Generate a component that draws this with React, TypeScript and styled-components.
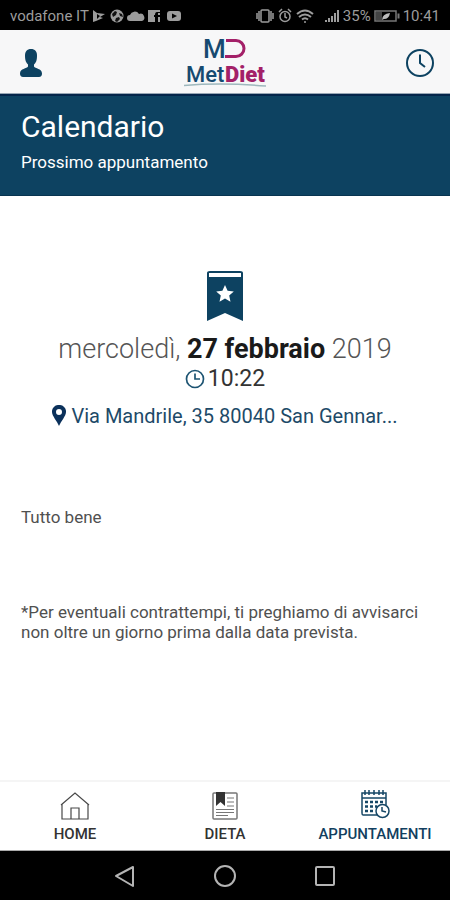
import React from "react";
import styled, { createGlobalStyle } from "styled-components";

const navy = "#0d4261";

const GlobalStyle = createGlobalStyle`
  *, *::before, *::after { box-sizing: border-box; }
  body { margin: 0; background: #fff; font-family: Roboto, "Liberation Sans", sans-serif; }
  h1, p { margin: 0; }
  svg { display: block; flex: none; }
`;

const Screen = styled.div`
  display: flex;
  flex-direction: column;
  min-height: 100vh;
`;

const StatusBar = styled.div`
  display: flex;
  align-items: center;
  justify-content: space-between;
  height: 30px;
  padding: 2px 10px 0;
  background: #000;
  color: #9c9c9c;
  font-size: 15px;
  white-space: nowrap;
`;

const StatusGroup = styled.div<{ $gap: number }>`
  display: flex;
  align-items: center;
  gap: ${(p) => p.$gap}px;
`;

const Header = styled.header`
  display: grid;
  grid-template-columns: 1fr auto 1fr;
  align-items: center;
  height: 64px;
  padding: 2px 15px 0;
  background: #f7f7f8;
  border-bottom: 1px solid #98a6b4;
`;

const IconButton = styled.button<{ $end?: boolean }>`
  justify-self: ${(p) => (p.$end ? "end" : "start")};
  padding: 0;
  border: 0;
  background: none;
  color: ${navy};
  cursor: pointer;
`;

const Banner = styled.section`
  height: 102px;
  padding: 14px 21px;
  background: ${navy};
  border-top: 2px solid #04254a;
  border-bottom: 1px solid #083450;
  color: #fff;
`;

const Title = styled.h1`
  font-size: 30px;
  line-height: 34px;
  font-weight: 400;
`;

const Subtitle = styled.p`
  margin-top: 8px;
  font-size: 17px;
  line-height: 20px;
`;

const Main = styled.main`
  flex: 1;
  padding: 74px 21px 0;
`;

const Appointment = styled.section`
  display: flex;
  flex-direction: column;
  align-items: center;
`;

const DateLine = styled.p`
  margin-top: 9px;
  font-size: 27px;
  line-height: 36px;
  font-weight: 300;
  color: #555;
  white-space: nowrap;
  strong { font-weight: 700; color: #1a1a1a; }
`;

const TimeLine = styled.p`
  display: flex;
  align-items: center;
  gap: 3px;
  font-size: 23px;
  line-height: 24px;
  color: #333;
  svg { color: #1d5472; }
`;

const AddressLink = styled.a`
  display: flex;
  align-items: center;
  gap: 5px;
  margin-top: 13px;
  font-size: 20px;
  line-height: 24px;
  color: #1d4a68;
  text-decoration: none;
  white-space: nowrap;
`;

const Paragraph = styled.p<{ $top: number }>`
  margin-top: ${(p) => p.$top}px;
  font-size: 17px;
  line-height: 20px;
  color: #505050;
`;

const TabBar = styled.nav`
  display: grid;
  grid-template-columns: repeat(3, 1fr);
  height: 71px;
  background: #fff;
  border-top: 2px solid #f5f5f5;
  border-bottom: 1px solid #aaa;
`;

const Tab = styled.a<{ $active?: boolean }>`
  display: flex;
  flex-direction: column;
  align-items: center;
  gap: 3px;
  padding-top: 7px;
  font-size: 15px;
  line-height: 20px;
  font-weight: 500;
  color: ${(p) => (p.$active ? "#123f60" : "#333")};
  text-decoration: none;
`;

const SystemBar = styled.div`
  display: flex;
  align-items: center;
  justify-content: center;
  gap: 76px;
  height: 49px;
  background: #000;
`;

const SystemButton = styled.button`
  padding: 0;
  border: 0;
  background: none;
  color: #b4b4b4;
  cursor: pointer;
`;

const ClockIcon = ({ size, stroke }: { size: number; stroke: number }) => (
  <svg width={size} height={size} viewBox="0 0 30 30" fill="none" stroke="currentColor" strokeWidth={stroke} aria-hidden="true">
    <circle cx="15" cy="15" r="13" />
    <path d="M15 6.500V15l5 4" />
  </svg>
);

const SmallClockIcon = () => (
  <svg width="20" height="20" viewBox="0 0 20 20" fill="none" stroke="currentColor" strokeWidth="1.700" aria-hidden="true">
    <circle cx="10" cy="10" r="8.500" />
    <path d="M10 4.500V10h5" />
  </svg>
);

const LeftStatusIcons = () => (
  <svg width="90" height="16" viewBox="0 0 90 16" fill="#9c9c9c" aria-hidden="true">
    <path d="M1 2l4 3 8 1-5 3 3 1-7 3-3 1z" />
    <path d="M5 6l3 2-3 3z" fill="#000" />
    <circle cx="25" cy="8" r="6.500" />
    <path d="M20 6l3-3 2 1-1 3-3 2zM27 5l3 1 1 3-3-1zM24 10l3-1 1 2-3 3-2-1z" fill="#111" />
    <path d="M38 13a3 3 0 0 1 0-6 5 5 0 0 1 9-1 3.500 3.500 0 0 1 3 7z" />
    <path d="M56 2h12v12h-2V9h2V7h-2V5h2V4h-3q-2 0-2 3h-1v2h1v5h-7z" />
    <rect x="75" y="3" width="14" height="10" rx="3" />
    <path d="M80 5.500l5 2.500-5 2.500z" fill="#000" />
  </svg>
);

const AlertIcons = () => (
  <svg width="58" height="16" viewBox="0 0 58 16" fill="none" stroke="#9c9c9c" strokeWidth="1.500" aria-hidden="true">
    <rect x="5" y="2" width="8" height="12" rx="1" />
    <path d="M1 5v6M3 3v10M15 3v10M17 5v6" />
    <circle cx="29" cy="8.500" r="5" />
    <path d="M29 5v4l2 1M23 4l3-3M32 1l3 3" />
    <path d="M41 6q8-7 16 0M43 9q6-5 12 0M46 11.500q3-2.500 6 0" strokeWidth="2" />
    <circle cx="49" cy="14" r="1" fill="#9c9c9c" stroke="none" />
  </svg>
);

const SignalIcon = () => (
  <svg width="16" height="16" viewBox="0 0 16 16" stroke="#9c9c9c" strokeWidth="2" aria-hidden="true">
    <path d="M2 14v-2M5 14v-4M8 14V8M11 14V5M14 14V2" />
  </svg>
);

const BatteryIcon = () => (
  <svg width="26" height="14" viewBox="0 0 26 14" fill="none" stroke="#777" aria-hidden="true">
    <rect x="1" y="2" width="21" height="10" strokeWidth="1.500" />
    <path d="M2 3h6v8H2z" fill="#444" stroke="none" />
    <path d="M8 11q0-6 8-7-1 6-6 6z" fill="#bbb" stroke="none" />
    <path d="M24.500 4.500v5" strokeWidth="2" />
  </svg>
);

const LogoSvg = styled.svg`
  overflow: visible;
  font-family: Roboto, "Liberation Sans", sans-serif;
`;

const Logo = () => (
  <LogoSvg width="84" height="56" viewBox="0 0 84 56" role="img" aria-label="MetDiet">
    <text x="20" y="23" fontSize="26" fontWeight="500" fill="#164a70">M</text>
    <path d="M43 5.500h10a8 8 0 0 1 0 16H42" fill="none" stroke="#a32068" strokeWidth="3" />
    <text x="3" y="47" fontSize="22" fontWeight="500" fill="#164a70">Met</text>
    <text x="42" y="47" fontSize="22" fontWeight="900" fill="#a32068">Diet</text>
    <path d="M1 50.500q38-3 82 .500" fill="none" stroke="#9eb8bd" strokeWidth="1.500" />
  </LogoSvg>
);

export default function App() {
  return (
    <Screen>
      <GlobalStyle />
      <StatusBar>
        <StatusGroup $gap={3}>
          <span>vodafone IT</span>
          <LeftStatusIcons />
        </StatusGroup>
        <StatusGroup $gap={10}>
          <AlertIcons />
          <StatusGroup $gap={3}>
            <SignalIcon />
            <span>35%</span>
            <BatteryIcon />
            <span>10:41</span>
          </StatusGroup>
        </StatusGroup>
      </StatusBar>
      <Header>
        <IconButton aria-label="Profilo">
          <svg width="32" height="30" viewBox="-5 0 32 30" fill="currentColor">
            <path d="M11 1c4 0 6 2.500 6 6.500 0 5-1 7-3 9v2c1 2 8 2 8 7 0 2-1 3.500-3 3.500H3c-2 0-3-1.500-3-3.500 0-5 7-5 8-7v-2c-2-2-3-4-3-9C5 3.500 7 1 11 1z" />
          </svg>
        </IconButton>
        <Logo />
        <IconButton $end aria-label="Cronologia"><ClockIcon size={30} stroke={2} /></IconButton>
      </Header>
      <Banner>
        <Title>Calendario</Title>
        <Subtitle>Prossimo appuntamento</Subtitle>
      </Banner>
      <Main>
        <Appointment>
          <svg width="36" height="52" viewBox="0 0 36 52" aria-hidden="true">
            <path d="M3 1h30q3 0 3 2v48l-18-8-18 8V3q0-2 3-2z" fill={navy} />
            <path d="M2 3h32v4H2z" fill="#fff" />
            <path d="M18 15l2.600 5.700 6.200.700-4.600 4.200 1.300 6.100-5.500-3.100-5.500 3.100 1.300-6.100-4.600-4.200 6.200-.700z" fill="#fff" />
          </svg>
          <DateLine>mercoledì, <strong>27 febbraio</strong> 2019</DateLine>
          <TimeLine><SmallClockIcon />10:22</TimeLine>
          <AddressLink href="#mappa">
            <svg width="14" height="22" viewBox="0 0 14 22" fill="#0b315b" aria-hidden="true">
              <path fillRule="evenodd" d="M7 0a6.500 6.500 0 0 1 7 7C14 11 9 16 7 21 5 16 0 11 0 7a6.500 6.500 0 0 1 7-7zm0 4a3 3 0 1 0 0 6 3 3 0 0 0 0-6z" />
            </svg>
            <span>Via Mandrile, 35 80040 San Gennar...</span>
          </AddressLink>
        </Appointment>
        <Paragraph $top={79}>Tutto bene</Paragraph>
        <Paragraph $top={75}>*Per eventuali contrattempi, ti preghiamo di avvisarci non oltre un giorno prima dalla data prevista.</Paragraph>
      </Main>
      <TabBar>
        <Tab href="#home">
          <svg width="30" height="32" viewBox="0 0 30 32" fill="none" stroke="#484848" strokeWidth="1.200" aria-hidden="true">
            <path d="M1 16L15 4l14 12M2 15v15h26V15M11 30V19h8v11" />
          </svg>
          HOME
        </Tab>
        <Tab href="#dieta">
          <svg width="28" height="32" viewBox="0 0 28 32" fill="none" stroke="#777" aria-hidden="true">
            <rect x="2" y="4" width="24" height="26" rx="1" strokeWidth="1.500" />
            <path d="M5 3h9v14l-4.500-4L5 17z" fill="#333" stroke="none" />
            <path d="M16 9h7M16 13h7M16 17h7M5 20.500h18M5 23.500h18M5 26.500h12" />
          </svg>
          DIETA
        </Tab>
        <Tab href="#appuntamenti" $active>
          <svg width="30" height="32" viewBox="0 0 30 32" fill="none" stroke="#164766" strokeWidth="1.500" aria-hidden="true">
            <path d="M17 26H3q-1 0-1-2V4h24v12M2 9h24M5 1v5M9 1v5M14 1v5M19 1v5M23 1v5" />
            <path d="M5 13h3M10 13h3M15 13h3M20 13h3M5 17.500h3M10 17.500h3M15 17.500h2M5 22h3M10 22h3" strokeWidth="2.500" />
            <circle cx="22.500" cy="22" r="6.500" fill="#fff" />
            <path d="M22 18v4l4 1" />
          </svg>
          APPUNTAMENTI
        </Tab>
      </TabBar>
      <SystemBar>
        <SystemButton aria-label="Indietro"><svg width="24" height="24" viewBox="0 0 24 24" fill="none" stroke="currentColor" strokeWidth="2" strokeLinejoin="round"><path d="M20 3v19L3 12z" /></svg></SystemButton>
        <SystemButton aria-label="Inizio"><svg width="24" height="24" viewBox="0 0 24 24" fill="none" stroke="currentColor" strokeWidth="2"><circle cx="12" cy="12" r="10" /></svg></SystemButton>
        <SystemButton aria-label="Recenti"><svg width="24" height="24" viewBox="0 0 24 24" fill="none" stroke="currentColor" strokeWidth="2"><rect x="3" y="3" width="18" height="18" rx="1" /></svg></SystemButton>
      </SystemBar>
    </Screen>
  );
}
